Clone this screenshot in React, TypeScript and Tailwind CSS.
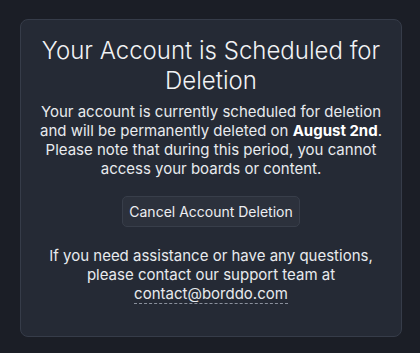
export default function App() {
  return (
    <div className="min-h-[353px] w-[420px] bg-[#1b1e26] pt-[19px] font-['Inter',sans-serif] text-[#e8eaee]">
      <div className="ml-5 flex w-[382px] flex-col items-center rounded-lg border border-[#363c49] bg-[#252a35] px-4 pb-[33px] pt-[16px] text-center">
        <h1 className="text-[24px] font-light leading-[30px] text-[#f1f2f4]">
          Your Account is Scheduled for Deletion
        </h1>
        <p className="mt-[6px] text-[15px] leading-[19px]">
          Your account is currently scheduled for deletion and will be permanently deleted on{" "}
          <strong className="font-bold text-white">August 2nd</strong>. Please note that during this period, you
          cannot access your boards or content.
        </p>
        <button
          type="button"
          className="mt-[18px] rounded-[5px] border border-[#383e4a] bg-[#2c313c] px-[6px] py-[5px] text-[14px] leading-[19px] text-[#eceef2]"
        >
          Cancel Account Deletion
        </button>
        <p className="mt-[19px] text-[15px] leading-[19px]">
          If you need assistance or have any questions, please contact our support team at{" "}
          <a href="#" className="border-b border-dashed border-[#8a909c] no-underline">
            contact@borddo.com
          </a>
        </p>
      </div>
    </div>
  );
}
